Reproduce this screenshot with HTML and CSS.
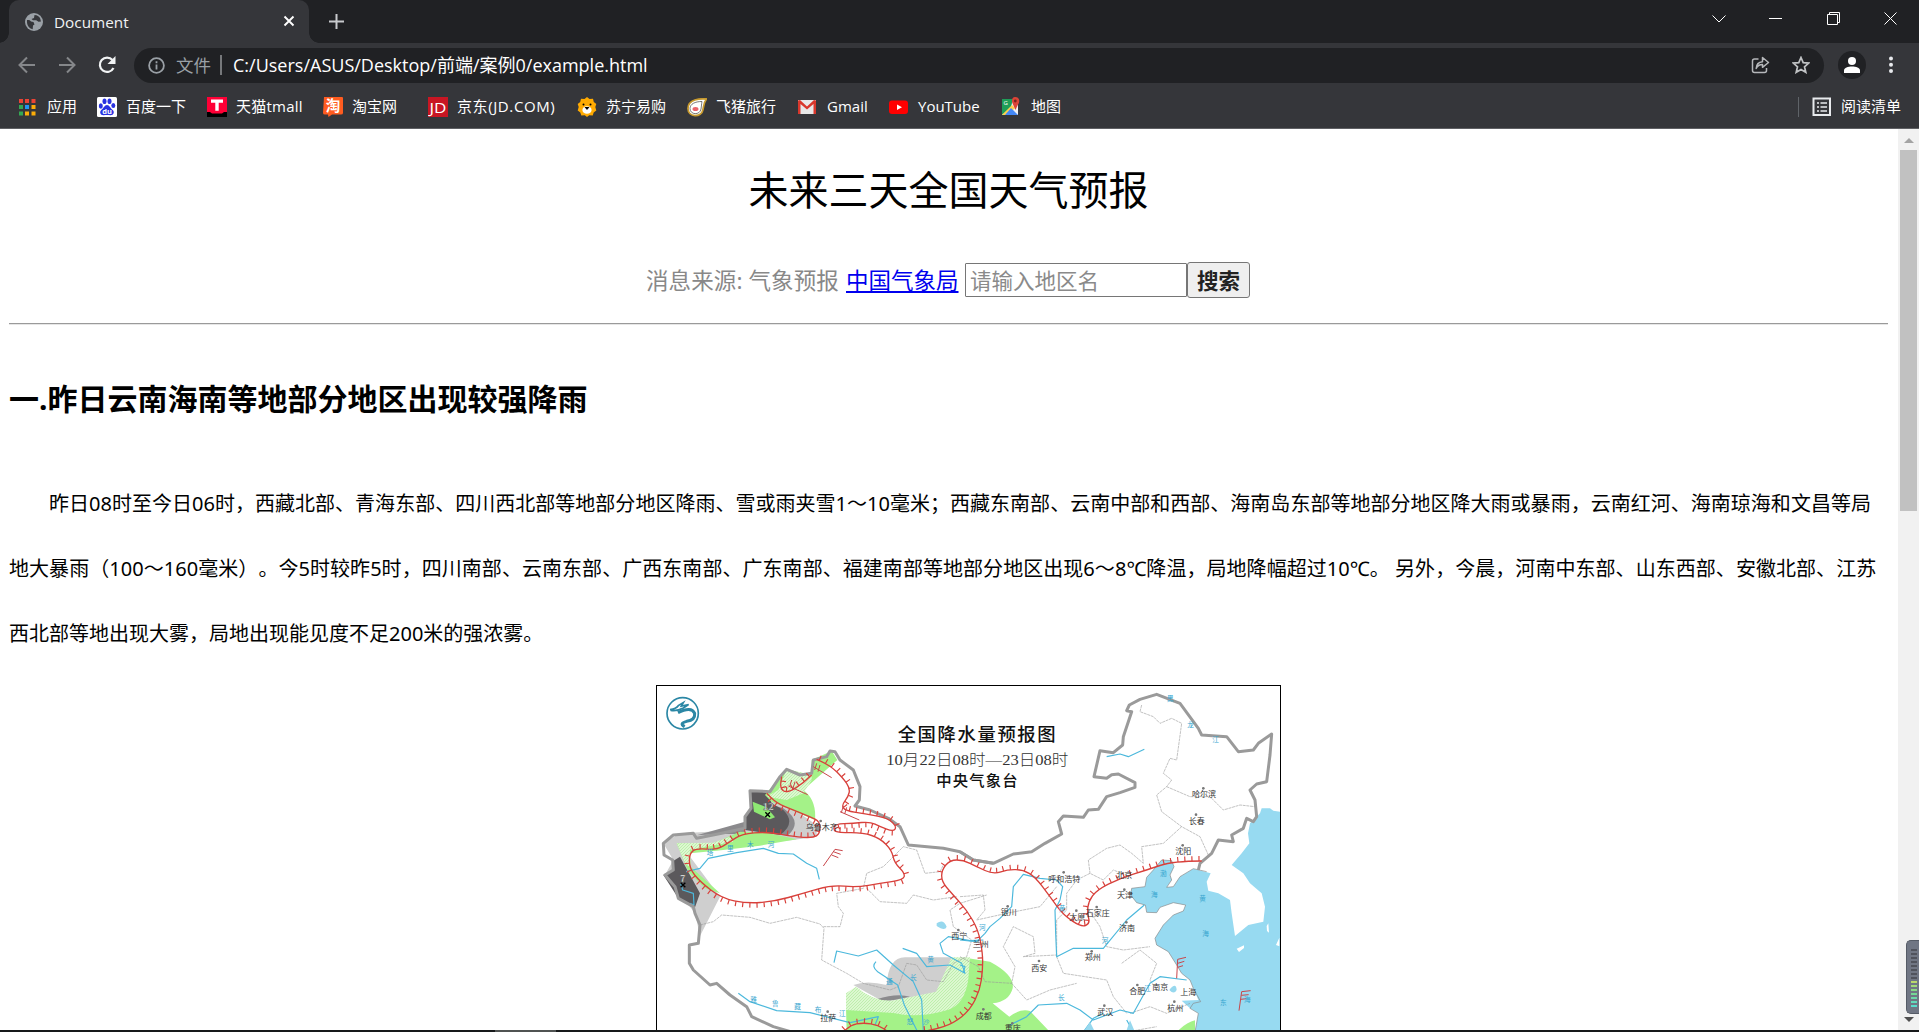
FILE: index.html
```html
<!DOCTYPE html>
<html lang="zh-CN">
<head>
<meta charset="UTF-8">
<title>Document</title>
<link rel="stylesheet" href="styles.css">
</head>
<body>
<div class="window">
  <div class="tabstrip">
    <div class="tab">
      <svg class="globe" width="18" height="18" viewBox="0 0 18 18"><circle cx="9" cy="9" r="9" fill="#9aa0a6"/><path d="M2 7c2.500-.3 3.500.5 4 1.500L8.500 9l1 2.500-1.500 1-.3 3.800C4 15.500 1.500 12 2 7zM9.500 1.900c3 .2 4.500 1.600 5.500 3.100l1 3.500-2.500.3-2.300-1.500H8L6.500 6 9 5z" fill="#35363a"/></svg>
      <span class="tab-title">Document</span>
      <svg class="tab-close" width="12" height="12" viewBox="0 0 12 12"><path d="M1.500 1.500l9 9M10.500 1.500l-9 9" stroke="#fff" stroke-width="1.900"/></svg>
    </div>
    <svg class="newtab" width="15" height="15" viewBox="0 0 15 15"><path d="M7.500 0v15M0 7.500h15" stroke="#c8cacd" stroke-width="2"/></svg>
    <div class="controls">
      <svg width="14" height="14" viewBox="0 0 14 14"><path d="M.5 3.500 7 10l6.500-6.500"/></svg>
      <svg width="14" height="14" viewBox="0 0 14 14"><path d="M0 6.500h13"/></svg>
      <svg width="14" height="14" viewBox="0 0 14 14"><path d="M.5 2.500h10v10H.5zM2.500 2.500v-2h10v10h-2"/></svg>
      <svg width="14" height="14" viewBox="0 0 14 14"><path d="M.5.5l12 12M12.500.5l-12 12"/></svg>
    </div>
  </div>
  <div class="toolbar">
    <svg class="nav" width="18" height="18" viewBox="0 0 18 18"><path d="M17 9H2M9 1.500 1.500 9 9 16.500" stroke="#85878a"/></svg>
    <svg class="nav" width="18" height="18" viewBox="0 0 18 18"><path d="M1 9h15M9 1.500 16.500 9 9 16.500" stroke="#85878a"/></svg>
    <svg class="nav" width="18" height="18" viewBox="0 0 18 18"><path d="M15.500 12A7.200 7.200 0 1 1 14.500 4" stroke="#f1f3f4" stroke-width="2.200"/><path d="M17.500 0v8h-8z" fill="#f1f3f4"/></svg>
    <div class="omnibox">
      <svg width="17" height="17" viewBox="0 0 17 17"><circle cx="8.500" cy="8.500" r="7.400" fill="none" stroke="#9aa0a6" stroke-width="1.800"/><path d="M8.500 7.500v5M8.500 4.200v2" stroke="#9aa0a6" stroke-width="1.800"/></svg>
      <span class="scheme">文件</span>
      <span class="sep"></span>
      <span class="url">C:/Users/ASUS/Desktop/前端/案例0/example.html</span>
      <svg class="share" width="19" height="18" viewBox="0 0 19 18"><g fill="none" stroke="#b5b7ba" stroke-width="1.500"><path d="M7.500 3H3.500Q1.500 3 1.500 5v9.500q0 2 2 2h10q2 0 2-2V12"/><path d="M5.200 12.500c.2-4.500 2-6.500 6.300-6.800V1.500l6 5-6 4.800V8.500c-3 0-5 1-6.300 4z" stroke-linejoin="round"/></g></svg>
      <svg class="star" width="18" height="18" viewBox="0 0 18 18"><path d="M9 1.500l2.200 5.100 5.500.5-4.200 3.700 1.300 5.500L9 13.400l-4.800 2.900 1.300-5.500L1.300 7.100l5.500-.5z" fill="none" stroke="#c0c2c4" stroke-width="1.700"/></svg>
    </div>
    <svg class="avatar" width="28" height="28" viewBox="0 0 28 28"><circle cx="14" cy="14" r="14" fill="#202124"/><circle cx="14" cy="10" r="4" fill="#fff"/><path d="M6 22v-2.500c0-5.300 16-5.300 16 0V22z" fill="#fff"/></svg>
    <svg class="dots" width="6" height="18" viewBox="0 0 6 18"><g fill="#e8eaed"><circle cx="3" cy="2.500" r="2"/><circle cx="3" cy="8.800" r="2"/><circle cx="3" cy="15" r="2"/></g></svg>
  </div>
  <div class="bookmarks">
    <div class="bm w79"><svg viewBox="0 0 20 20"><path d="M1 2h4v4H1zM7 2h4v4H7zM13.500 2h4v4h-4z" fill="#ea4335"/><path d="M1 8h4v4H1zM1 14.500h4v4H1z" fill="#34a853"/><path d="M7 8h4v4H7z" fill="#2196f3"/><path d="M13.500 8h4v4h-4zM7 14.500h4v4H7zM13.500 14.500h4v4h-4z" fill="#fbac08"/></svg><span>应用</span></div>
    <div class="bm w110"><svg viewBox="0 0 20 20"><rect width="20" height="20" rx="1.500" fill="#fff"/><g fill="#2932e1"><ellipse cx="3.800" cy="9" rx="2" ry="2.700"/><ellipse cx="7.500" cy="4.200" rx="2" ry="2.800"/><ellipse cx="12.500" cy="4.200" rx="2" ry="2.800"/><ellipse cx="16.300" cy="8.500" rx="2" ry="2.600"/><path d="M10 8c2.500 0 3.500 3.500 6 5.200 1.500 1.500 1 5-2.500 5-2-.4-5-.4-7 0-3.500 0-4-3.500-2.500-5C6.500 11.500 7.500 8 10 8z"/></g><text x="10" y="16.500" font-size="7.500" font-weight="700" text-anchor="middle" fill="#fff">du</text></svg><span>百度一下</span></div>
    <div class="bm w116"><svg viewBox="0 0 20 20"><path d="M0 0h20v20H0z" fill="#000"/><path d="M0 0h20v15h-3l-2 1.500H5L3 15H0z" fill="#ff0036"/><path d="M4 2.500h12v3.300h-4.300v8H8.300v-8H4z" fill="#fff"/></svg><span class="wide">天猫tmall</span></div>
    <div class="bm w105"><svg viewBox="0 0 20 20"><path d="M1 0h18q1 0 1 1v15q0 1.500-2 1.500H9L5.500 20l-.5-2.500H2Q0 17.500 0 16z" fill="#ff5c20"/><text x="10" y="14" font-size="14.500" font-weight="700" text-anchor="middle" fill="#fff">淘</text></svg><span>淘宝网</span></div>
    <div class="bm w149"><svg viewBox="0 0 20 20"><path d="M0 0h20v20H0z" fill="#c81623"/><text x="10" y="15.500" font-size="14" text-anchor="middle" textLength="17" lengthAdjust="spacingAndGlyphs" fill="#fff">JD</text></svg><span class="wider">京东(JD.COM)</span></div>
    <div class="bm w110"><svg viewBox="0 0 20 20"><path d="M10 0l2.500 2 3.500-.3.800 3.300 2.500 2-1 3 1 3.500-2.600 2-1 3-3.500-.3L10 20l-2.200-1.800-3.500.3-1-3L.7 13.500l1-3.500-1-3 2.500-2L4 1.700 7.500 2z" fill="#ffaa01"/><ellipse cx="10" cy="13" rx="4.600" ry="3.800" fill="#fff"/><path d="M7.500 10h5L10 13z"/><circle cx="6.500" cy="7.500" r="1"/><circle cx="13.500" cy="7.500" r="1"/></svg><span>苏宁易购</span></div>
    <div class="bm w111"><svg viewBox="0 0 20 20"><path d="M19.500 2C13 1.500 1 2 1 11.500c0 9 13.500 9.500 15 1C17 8 17 5 19.500 2z" fill="#fff" stroke="#c79a2e" stroke-width="1.800"/><path d="M15 4.500C8 4.500 3 7 3 11.500c0 6.500 10 7 11 .5.500-3 .5-5 1-7.500z" fill="none" stroke="#555" stroke-width=".8"/><ellipse cx="8.500" cy="12" rx="3" ry="2" fill="#e9646b"/></svg><span>飞猪旅行</span></div>
    <div class="bm w91"><svg viewBox="0 0 20 20"><path d="M0 3h18v14H0z" fill="#e8e8e8"/><path d="M0 17V3.500L2 3l7 6.500L16 3l2 .5V17h-2.500V7L9 12.500 2.500 7v10z" fill="#d9372c"/></svg><span>Gmail</span></div>
    <div class="bm w113"><svg viewBox="0 0 20 20"><rect x="0" y="3.500" width="19" height="13.500" rx="3" fill="#f00"/><path d="M8 7.500l5 2.800-5 2.800z" fill="#fff"/></svg><span>YouTube</span></div>
    <div class="bm"><svg viewBox="0 0 20 20"><path d="M0 3h16v15H0z" fill="#f1f1f1"/><path d="M0 2h11l-2 8-9 8z" fill="#1e9d58"/><path d="M0 18 10 8l3 3-7 7z" fill="#ffd04b"/><path d="M3 18l6-7 7 7z" fill="#4387f5"/><path d="M13 0c5 0 5 5 3 7.500L13.500 13 11 7.500C9 4 10 0 13 0z" fill="#db4437"/><circle cx="13.300" cy="4" r="1.400" fill="#7b231e"/><text x="1.500" y="8" font-size="6" fill="#fff">G</text></svg><span>地图</span></div>
    <div class="reading"><svg viewBox="0 0 20 20"><rect x="1.500" y="1.500" width="16.500" height="16.500" fill="none" stroke="#e8eaed" stroke-width="2"/><path d="M5 6h2M8.500 6H15M5 10h2M8.500 10H15M5 14h2M8.500 14H15" stroke="#e8eaed" stroke-width="1.600"/></svg><span>阅读清单</span></div>
  </div>

  <div class="viewport">
    <main class="page">
      <h1>未来三天全国天气预报</h1>
      <div class="source">
        <span class="from">消息来源: 气象预报</span>
        <a href="#">中国气象局</a>
        <input type="text" placeholder="请输入地区名"><button>搜索</button>
      </div>
      <hr>
      <h2>一.昨日云南海南等地部分地区出现较强降雨</h2>
      <p class="report"><span class="ln first">昨日08时至今日06时，西藏北部、青海东部、四川西北部等地部分地区降雨、雪或雨夹雪1～10毫米；西藏东南部、云南中部和西部、海南岛东部等地部分地区降大雨或暴雨，云南红河、海南琼海和文昌等局</span><span class="ln second">地大暴雨（100～160毫米）。今5时较昨5时，四川南部、云南东部、广西东南部、广东南部、福建南部等地部分地区出现6～8℃降温，局地降幅超过10℃。 另外，今晨，河南中东部、山东西部、安徽北部、江苏</span><span class="ln">西北部等地出现大雾，局地出现能见度不足200米的强浓雾。</span></p>
      <svg class="map" viewBox="18 15 1875 1041" width="625" height="347">
        <defs>
          <pattern id="hatch" width="9" height="9" patternUnits="userSpaceOnUse"><rect width="9" height="9" fill="#dcf8d0"/><path d="M0 9 9 0" stroke="#a0e58a" stroke-width="1.500"/></pattern>
        </defs>
        <rect x="18" y="15" width="1875" height="1100" fill="#fff"/>
        <!-- sea -->
        <g transform="translate(930 0)">
          <path fill="#97daf1" d="M960 395 940 392 930 385 905 385 900 400 870 430 864 460 868 490 845 520 815 555 850 580 870 610 905 640 915 680 910 725 865 735 825 768 815 700 810 660 775 640 745 632 740 605 752 580 700 566 660 590 640 620 620 622 635 600 630 585 642 560 635 542 605 540 580 570 560 592 555 620 515 625 512 645 530 668 556 675 560 697 590 698 600 682 640 668 677 675 670 693 640 705 610 735 585 775 590 795 625 815 650 855 665 880 690 900 700 925 715 960 665 962 690 985 715 1000 705 1056 960 1056z"/>
          <path fill="#fff" d="M830 806l22-10 0 8-15 12zM920 738l5-8 2 28-6-5zM948 795l10-22v26z"/>
          <path fill="none" stroke="#888" stroke-width="2" d="M740 575 700 566 660 590 640 620 620 622 635 600 630 585 642 560 635 542 605 540 580 570 560 592 555 620 515 625 512 645 530 668 556 675 560 697 590 698 600 682 640 668 677 675 670 693 640 705 610 735 585 775 590 795 625 815 650 855 665 880 690 900 700 925 722 965 700 970 690 985 715 1000 705 1056"/>
        </g>
        <!-- precipitation areas -->
        <path fill="#cfcfcf" d="M40 490 90 460 280 450 320 340 370 360 420 380 500 435 500 470 430 480 200 500 90 490 210 650 150 768 135 700 45 585 70 540zM610 915Q650 900 710 915 715 832 765 832H905L895 910 860 945 700 965z"/>
        <path fill="#8b8a8d" d="M140 466 285 425 285 462 210 462zM350 370 400 385q60 40 15 80l-25 0q30-40-8-65zM680 958q60-20 100-8l-75 15z"/>
        <path fill="#5b595c" d="M66 545 90 530 150 640 135 682 85 655 40 585 68 572zM300 330 350 332 365 370 400 390Q440 430 390 465L285 450 285 410 303 385z"/>
        <path fill="#a4f288" d="M190 490 270 455 350 458 440 478 330 497 200 512 120 520 122 560 210 640 165 625 115 575 80 490zM485 240 545 213 562 240 460 330q40 30 35 90L365 365 345 345 390 290 410 268 485 285zM588 985 800 1000 900 985 955 835 1020 845q75 40 68 80-10 40-60 45l50 40Q1110 985 1140 993L1175 1030 1200 1056H590z"/>
        <path fill="url(#hatch)" d="M80 490 190 488 240 470 250 485 170 500 120 510 118 560 105 550zM385 330 410 268 485 285 485 300 460 340 410 360 350 350zM588 990V940l30-20q60 50 120 40l120-25 47-103h55l-5 65q-10 75-60 92-90 28-165 10z"/>
        <path fill="#8ee873" d="M308 365 350 382 375 412 360 418 312 395z"/>
        <path fill="#a4f288" d="M1580 1056q30-30 55-35v35z"/>
        <!-- province borders -->
        <g fill="none" stroke="#999" stroke-width="1.800" stroke-dasharray="9 2">
          <path d="M150 735 190 725 215 705 300 712 360 730 440 712 510 732 522 745 515 840 590 880 640 910 720 930 745 920 770 850 800 855 830 900 880 905 910 850 950 830 965 780 910 740 900 690 930 670 1010 645M520 740 570 740 580 700 565 680 560 640 640 625 650 580 700 560 760 500 800 510 825 580 870 575 880 555M650 625 690 665 770 670 790 645 850 660 920 650"/>
          <g transform="translate(930 0)"><path d="M545 75 540 95 580 110 600 130 635 115 665 130 650 240 630 235 610 280 635 300 620 320 590 345 605 395 665 440 720 470 745 525M620 320 690 350 750 350 790 390 840 375 885 380M665 440 610 490 545 500 550 550 515 520 480 495 440 505 385 540 390 580 430 600 460 570 510 590M390 580 350 600 320 640 320 690 290 720 290 830 310 880 440 900 460 950 500 1000M380 680 420 740 440 800 490 810 570 800M0 650 70 645 75 690 50 720 140 700 240 680 290 620M0 830 55 860 75 905 155 910 165 860 130 800 160 740 220 770 225 820 190 830 290 825M155 910 200 960 270 930 350 910M485 850 540 810 590 850 570 900 590 930M510 1000 570 980 620 1000 690 970M500 1056 590 1040"/></g>
        </g>
        <!-- rivers -->
        <g fill="none" stroke="#4bb8dc" stroke-width="3.500" stroke-linejoin="round">
          <path d="M108 575 150 565 175 535 260 518 340 505 385 520 430 522 470 550 500 565 508 598M92 610 98 630 130 640 132 675 120 670M552 848 560 813 625 828 680 810 730 855 790 905 815 960 820 1056M678 845q-15 15 5 30l60 40 20 60 40 81M758 805 800 820 830 860 900 855 945 880 935 850 880 820 870 790 895 770 960 782 1000 780M265 940 300 965 380 992 480 998 600 1028 685 1010 675 1035"/>
          <g transform="translate(930 0)"><path d="M440 230 480 222 505 230 553 208M0 780 50 785 75 760 90 740 120 715 155 680 160 620 190 583 240 595 290 600 308 620 300 660 285 690 287 760 290 830 340 805 430 805 500 720 553 675M150 1035 200 1010 235 975 320 970 360 990 400 1020 480 990 520 1000 570 910 600 890 680 900M370 1056 400 1015 430 1000M500 1020l20 36M0 855l15 5-5 18"/></g>
        </g>
        <path fill="#97d8ee" d="M860 730q20-15 30 10-5 15-30-2zM1558 930q20-25 22 0-8 15-22 0zM1300 1056l20-30 15 30zM1428 1056l12-35 15 35z"/>
        <!-- national border -->
        <g fill="none" stroke="#9a9a9a" stroke-width="9" stroke-linejoin="round">
          <path d="M425 1056 370 1040 305 1010 290 980 240 945 200 910 180 915 130 870 118 850 118 795 145 790 150 735 135 700 130 680 85 655 75 620 45 585 70 570 68 540 42 525 40 490 70 465 130 460 140 475 215 460 285 445 285 410 303 385 300 332 360 335 390 290 410 268 450 285 485 280 490 240 530 230 540 213 555 215 570 240 610 270 630 320 628 360 615 378 660 390 715 415 750 440 775 495 880 505 930 515 970 540 1030 550"/>
          <path transform="translate(930 0)" d="M0 515 40 540 100 550 160 522 215 515 255 490 305 462 295 425 310 408 370 412 385 390 415 388 440 350 480 338 525 322 525 308 475 282 455 284 440 295 402 290 420 212 460 218 488 195 490 170 515 95 500 92 508 75 540 58 590 43 660 70 715 145 725 165 800 170 835 215 880 210 895 190 935 162 930 225 920 305 890 312 870 330 885 360 890 410 880 425 860 415 850 445 815 465 820 485 775 480 755 520 720 550 715 570"/>
        </g>
        <!-- fronts -->
        <g class="fronts" fill="none" stroke="#d8403b" stroke-width="4">
          <path class="front" data-side="-1" d="M500 238 540 255 580 295 600 325 595 350 575 375 585 392 650 402 715 415 740 440 730 455 690 440 660 425 610 430 555 432 550 450 565 458 640 458 690 475 725 510 733 548 765 580 760 600 690 610 620 622 545 615 460 640 370 665 290 670 215 655 150 605 118 565 118 520 140 505 200 510 240 485 275 462 350 455 430 470 490 474 510 460 510 425 480 410 430 390 380 370 350 340"/>
          <path class="front" data-side="1" d="M485 285 460 310 410 340 390 325 395 290"/>
          <path class="front" data-side="1" d="M1655 543 1570 543 1490 570 1410 595 1340 630 1315 665 1312 700 1320 730 1295 742 1240 705 1200 650 1155 590 1120 570 1075 568 1030 583 980 560 940 540 900 540 875 570 875 605 905 640 950 690 985 750 998 820 998 870 990 930 960 990 910 1030 850 1050 800 1056"/>
          <path class="front" data-side="-1" d="M580 1056 600 1035 640 1028 685 1035 715 1056"/>
        </g>
        <g fill="none" stroke="#c9464a" stroke-width="3">
          <path d="M490 260 545 293M500 250l-6 20M510 255l-6 20M415 318 473 344M425 300l-6 20M435 305l-6 20M570 395 628 420M580 378l-6 20M590 382l-6 20M520 558 555 508 578 512M550 515l22 8M545 525l20 8M1580 895 1583 838 1608 832M1583 850l20-6M1583 862l16-5M1767 992 1775 935 1802 932M1774 946l22-2M1772 958l18-2"/>
        </g>
        <path d="M346 397l14 14M360 397l-14 14M92 608l14 14M106 608l-14 14" stroke="#000" stroke-width="4"/>
        <!-- agency emblem -->
        <g fill="none" stroke="#2b87a5"><circle cx="98" cy="100" r="47" stroke-width="5"/><path d="M60 89Q78 88 86 76l14-8-6 10 22-4-16 10q-18 10-38 7" stroke-width="5"/><path d="M84 98q40-20 50 2 2 20-24 24-24 6-6 16" stroke-width="9"/></g>
        <g class="map-title" text-anchor="middle">
          <text x="980" y="183" font-size="55" font-weight="500" textLength="474">全国降水量预报图</text>
          <text class="date" x="982" y="256" font-size="46" textLength="546" lengthAdjust="spacingAndGlyphs">10月22日08时—23日08时</text>
          <text x="981" y="318" font-size="46" font-weight="500" textLength="244">中央气象台</text>
        </g>
        <g class="cities" text-anchor="middle">
          <text x="515" y="451">乌鲁木齐</text><text x="928" y="778">西宁</text><text x="535" y="1023">拉萨</text><text x="992" y="801">兰州</text><text x="1662" y="352">哈尔滨</text><text x="1640" y="431">长春</text><text x="1600" y="523">沈阳</text><text x="1243" y="605">呼和浩特</text><text x="1423" y="595">北京</text><text x="1425" y="655">天津</text><text x="1076" y="706">银川</text><text x="1282" y="720">太原</text><text x="1343" y="709">石家庄</text><text x="1431" y="754">济南</text><text x="1328" y="841">郑州</text><text x="1168" y="872">西安</text><text x="1462" y="943">合肥</text><text x="1531" y="930">南京</text><text x="1615" y="946">上海</text><text x="1576" y="992">杭州</text><text x="1366" y="1005">武汉</text><text x="1001" y="1017">成都</text><text x="1088" y="1054">重庆</text>
        </g>
        <g fill="#777"><circle cx="512" cy="423" r="4"/><circle cx="925" cy="750" r="4"/><circle cx="533" cy="995" r="4"/><circle cx="1660" cy="325" r="4"/><circle cx="1638" cy="404" r="4"/><circle cx="1598" cy="496" r="4"/><circle cx="1241" cy="577" r="4"/><circle cx="1423" cy="629" r="4"/><circle cx="1073" cy="679" r="4"/><circle cx="1279" cy="692" r="4"/><circle cx="1340" cy="681" r="4"/><circle cx="1429" cy="727" r="4"/><circle cx="1325" cy="814" r="4"/><circle cx="1167" cy="843" r="4"/><circle cx="1462" cy="915" r="4"/><circle cx="1573" cy="965" r="4"/><circle cx="1363" cy="977" r="4"/><circle cx="1000" cy="988" r="4"/><circle cx="1087" cy="1030" r="4"/></g>
        <g class="waters" text-anchor="middle">
          <text x="180" y="526">塔</text><text x="241" y="513">里</text><text x="301" y="501">木</text><text x="363" y="500">河</text><text x="311" y="965">雅</text><text x="376" y="979">鲁</text><text x="443" y="986">藏</text><text x="504" y="996">布</text><text x="577" y="1007">江</text><text x="718" y="913">通</text><text x="790" y="900">长</text><text x="842" y="846">黄</text><text x="780" y="1032">怒</text><text x="828" y="1032">沙</text><text x="997" y="751">河</text><text x="1236" y="694">黄</text><text x="1234" y="960">长</text><text x="1365" y="788">河</text><text x="1540" y="587">渤</text><text x="1513" y="650">海</text><text x="1658" y="664">黄</text><text x="1667" y="767">海</text><text x="1720" y="974">东</text><text x="1792" y="967">海</text><text x="1622" y="141">龙</text><text x="1561" y="64">黑</text><text x="1697" y="187">江</text><text x="1493" y="933">江</text>
        </g>
        <g fill="#fff" stroke="#555" stroke-width="1.500" font-size="28" font-weight="700"><text x="338" y="390">12</text><text x="90" y="606">7</text></g>
        <rect x="19.500" y="16.500" width="1872" height="1100" fill="none" stroke="#000" stroke-width="3"/>
      </svg>
    </main>
    <div class="scrollbar">
      <svg class="up" width="10" height="5" viewBox="0 0 10 5"><path d="M0 5 5 0l5 5z" fill="#a3a3a3"/></svg>
      <div class="thumb"></div>
      <svg class="down" width="10" height="5" viewBox="0 0 10 5"><path d="M0 0h10L5 5z" fill="#505050"/></svg>
      <div class="meter"><i class="off"></i><i class="on"></i></div>
    </div>
  </div>
  <div class="taskbar"><span></span></div>
</div>
<script src="fronts.js"></script>
</body>
</html>
```
FILE: fronts.js
```js
// Rounds each front line and adds the short perpendicular ticks along one side.
document.querySelectorAll('.front').forEach(function (line) {
  var n = line.getAttribute('d').slice(1).split(' ').map(Number);
  var last = n.length - 2;
  var curve = 'M' + n[0] + ' ' + n[1];
  for (var i = 2; i < last; i += 2) {
    curve += 'Q' + n[i] + ' ' + n[i + 1] + ' ' + (n[i] + n[i + 2]) / 2 + ' ' + (n[i + 1] + n[i + 3]) / 2;
  }
  line.setAttribute('d', curve + 'L' + n[last] + ' ' + n[last + 1]);

  var side = Number(line.dataset.side);
  var total = line.getTotalLength();
  var d = '';
  for (var s = 10; s < total - 4; s += 21) {
    var a = line.getPointAtLength(s - 2);
    var b = line.getPointAtLength(s + 2);
    var len = Math.hypot(b.x - a.x, b.y - a.y) || 1;
    var nx = -(b.y - a.y) / len * 15 * side;
    var ny = (b.x - a.x) / len * 15 * side;
    d += 'M' + a.x + ' ' + a.y + 'l' + nx + ' ' + ny;
  }
  var ticks = document.createElementNS('http://www.w3.org/2000/svg', 'path');
  ticks.setAttribute('d', d);
  ticks.setAttribute('stroke-width', '3.5');
  line.parentNode.appendChild(ticks);
});
```
FILE: styles.css
```css
* { box-sizing: border-box; }
body { margin: 0; font-family: "Noto Sans", "Noto Sans CJK SC", sans-serif; background: #fff; text-spacing-trim: space-all; }
.window { width: 1919px; height: 1032px; display: flex; flex-direction: column; overflow: hidden; }
svg { display: block; flex: none; }

.tabstrip { height: 43px; background: #202124; display: flex; align-items: flex-start; padding-left: 9px; flex: none; }
.tab { position: relative; width: 300px; height: 43px; background: #35363a; border-radius: 10px 10px 0 0; display: flex; align-items: center; padding: 0 14px 0 16px; color: #f1f3f4; font: 15.3px "Open Sans", sans-serif; }
.tab::before, .tab::after { content: ""; position: absolute; bottom: 0; width: 10px; height: 10px; }
.tab::before { left: -10px; background: radial-gradient(circle at 0 0, transparent 9.5px, #35363a 10px); }
.tab::after { right: -10px; background: radial-gradient(circle at 100% 0, transparent 9.5px, #35363a 10px); }
.tab-title { margin: 0 auto 0 11px; }
.tab-close { margin-top: -1px; }
.newtab { margin: 14px 0 0 20px; }
.controls { margin: 12px 21px 0 auto; display: flex; gap: 43.500px; }
.controls svg { fill: none; stroke: #fff; stroke-width: 1; }

.toolbar { height: 45px; background: #35363a; display: flex; align-items: center; padding: 0 0 1px 18px; flex: none; }
.nav { fill: none; stroke-width: 2; margin-right: 22px; }
.omnibox { width: 1690px; height: 35px; margin-left: -4px; border-radius: 18px; background: #202124; display: flex; align-items: center; padding: 0 14px 0 14px; font-size: 17.5px; color: #fff; }
.scheme { color: #9aa0a6; margin: -2px 0 0 11px; }
.sep { width: 2px; height: 20px; background: #76787b; margin: 0 11px 0 9px; }
.url { font-family: "Open Sans", "Noto Sans CJK SC", sans-serif; font-size: 18px; margin-top: -2px; white-space: nowrap; }
.share { margin-left: auto; }
.star { margin-left: 22px; }
.avatar { margin-left: 14px; }
.dots { margin-left: 22px; }

.bookmarks { height: 41px; background: #35363a; border-bottom: 1px solid #5f6064; display: flex; align-items: center; padding: 0 18px 2px 18px; font: 15px "Open Sans", "Noto Sans CJK SC", sans-serif; color: #fff; flex: none; }
.bm, .reading { display: flex; align-items: center; gap: 9px; white-space: nowrap; }
.bm svg, .reading svg { width: 20px; height: 20px; }
.bm span, .reading span { margin-top: -3px; }
.bm .wide { letter-spacing: .25px; }
.bm .wider { letter-spacing: .6px; }
.w79 { width: 79px; } .w91 { width: 91px; } .w105 { width: 105px; } .w110 { width: 110px; }
.w111 { width: 111px; } .w113 { width: 113px; } .w116 { width: 116px; } .w149 { width: 149px; }
.reading { margin-left: auto; border-left: 1px solid #5f6368; padding-left: 13px; height: 20px; }

.viewport { height: 901px; display: flex; flex: none; overflow: hidden; }
.page { width: 1898px; padding: 0 10px 0 9px; overflow: hidden; }
h1 { margin: 31px 0 0; font-size: 40px; font-weight: 400; line-height: 60px; text-align: center; }
.source { margin-top: 42px; display: flex; align-items: center; height: 36px; padding-left: 637px; font-size: 22.5px; color: #888; white-space: nowrap; }
.from { width: 200px; letter-spacing: .1px; margin-top: -2px; }
.source a { width: 119px; color: #00e; text-underline-offset: 2px; margin-top: -2px; }
.source input { width: 222px; height: 34px; padding: 0 4px 2px; border: 1px solid #767676; border-radius: 1px; font: 21.5px "Noto Sans CJK SC", sans-serif; }
.source input::placeholder { color: #8a8a8a; }
.source button { width: 63px; height: 36px; padding: 0 0 2px; border: 1px solid #767676; border-radius: 3px; background: #efefef; color: #222; font: 700 21.5px "Noto Sans CJK SC", sans-serif; }
hr { margin: 25px 0 0; border: 0; height: 2px; border-top: 1px solid #9a9a9a; border-bottom: 1px solid #e6e6e6; }
h2 { margin: 52px 0 0; font-size: 30px; line-height: 44px; }
.report { margin: 50px 0 0; font-size: 20px; line-height: 65px; }
.ln { display: block; white-space: nowrap; }
.first { text-indent: 40px; letter-spacing: .02px; }
.second { letter-spacing: .05px; }
.map { margin: 19px 0 0 647px; overflow: hidden; }
.map text { font-family: "Noto Sans CJK SC", sans-serif; }
.map-title text { fill: #111; }
.map .date { font-family: "Liberation Serif", "Noto Sans CJK SC", serif; fill: #333; font-weight: 300; }
.cities { font-size: 24px; fill: #333; }
.waters { font-size: 20px; fill: #36a5cf; }

.scrollbar { position: relative; width: 21px; background: #f1f1f1; display: flex; flex-direction: column; align-items: center; padding: 9px 0 8px; }
.thumb { width: 17px; height: 361px; margin-top: 7px; background: #c1c1c1; }
.down { margin-top: auto; }
.meter { position: absolute; right: 0; top: 811px; width: 13px; height: 74px; border: 1px solid #555b66; border-right: 0; border-radius: 5px 0 0 5px; background: #707684; padding: 8px 0 0 4px; }
.meter i { display: block; width: 6px; }
.off { height: 32px; background: repeating-linear-gradient(#50535d 0 2px, #707684 2px 4px); }
.on { height: 26px; background: repeating-linear-gradient(transparent 0 2px, #707684 2px 4px), linear-gradient(#c0d868, #78d890 45%, #58dcd0); }

.taskbar { height: 2px; background: #17191a; flex: none; }
.taskbar span { display: block; width: 61px; height: 2px; margin-left: 495px; background: #505352; }
```
